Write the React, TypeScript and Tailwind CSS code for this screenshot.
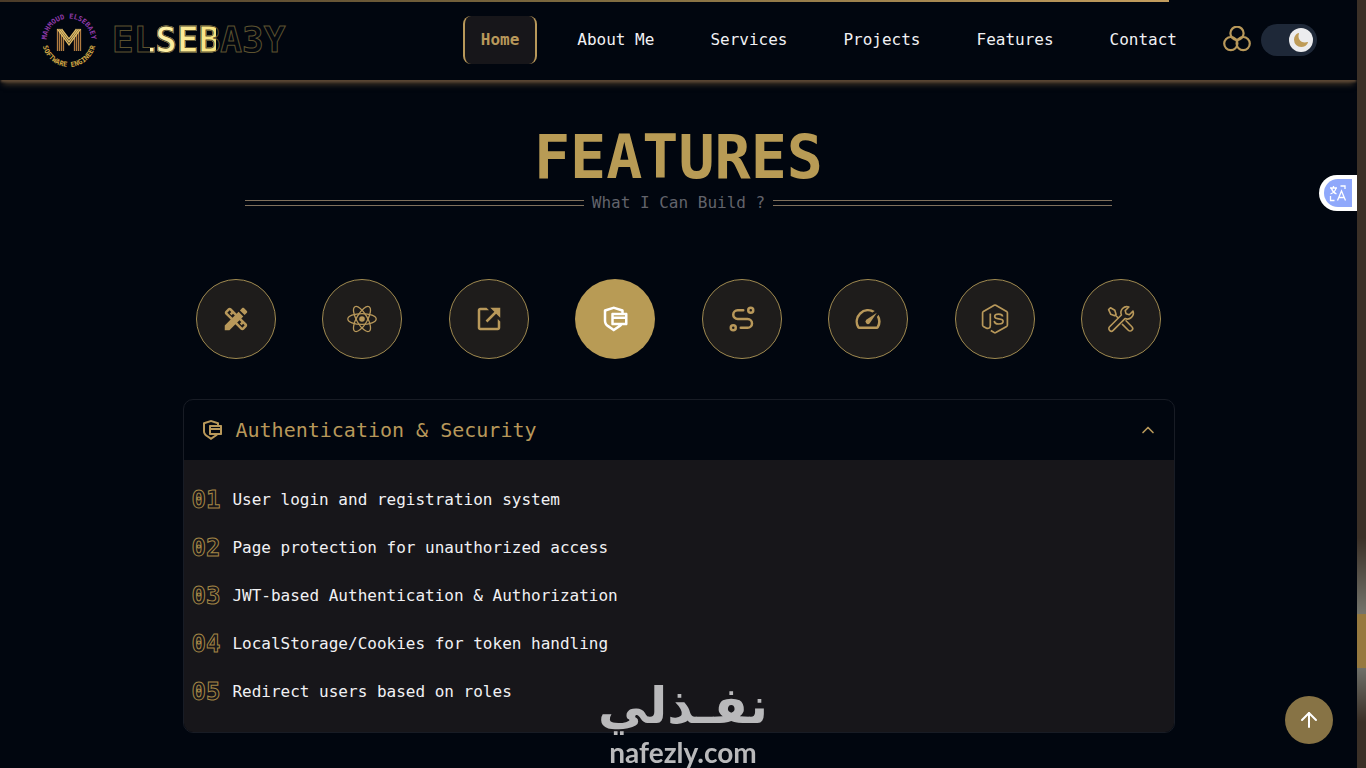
import React, { useState } from 'react'
import { BiLinkExternal } from 'react-icons/bi'
import { FiArrowUp, FiChevronUp } from 'react-icons/fi'
import { IoMoon } from 'react-icons/io5'
import { MdDesignServices, MdOutlineSpeed } from 'react-icons/md'
import { RiSecurePaymentLine } from 'react-icons/ri'
import { TbRoute } from 'react-icons/tb'

const AtomIcon = ({ className }: { className?: string }) => (
    <svg viewBox="0 0 30 30" className={className} fill="none" stroke="currentColor" strokeWidth="1.3" aria-hidden="true">
        <ellipse cx="15" cy="15" rx="14.2" ry="5.4" />
        <ellipse cx="15" cy="15" rx="14.2" ry="5.4" transform="rotate(60 15 15)" />
        <ellipse cx="15" cy="15" rx="14.2" ry="5.4" transform="rotate(120 15 15)" />
        <circle cx="15" cy="15" r="2.8" fill="currentColor" stroke="none" />
    </svg>
)

const NodeIcon = ({ className }: { className?: string }) => (
    <svg viewBox="0 0 30 30" className={className} fill="none" stroke="currentColor" strokeWidth="1.7" strokeLinejoin="round" aria-hidden="true">
        <path d="M10.300 9.600V21.500c0 2.600-2 3.600-4.200 2.400L3.400 22.400q-.8-.5-.8-1.400V8.800q0-.9.800-1.400L14.200 1.300q.8-.4 1.600 0L26.600 7.400q.8.500.8 1.400V21q0 .9-.8 1.400L15.800 28.600q-.8.400-1.600 0L10.800 26.600" />
        <path d="M22.600 12.500c-.2-1.700-1.500-2.400-3.900-2.400-2.600 0-4 .8-4 2.300 0 1.700 1.500 2.100 4 2.400 3 .3 4.400.8 4.400 2.500 0 1.800-1.500 2.700-4.300 2.700-3 0-4.400-1-4.500-3.100" />
    </svg>
)

const ToolsIcon = ({ className }: { className?: string }) => (
    <svg viewBox="0 0 30 30" className={className} fill="none" stroke="currentColor" strokeWidth="1.6" strokeLinejoin="round" strokeLinecap="round" aria-hidden="true">
        <path d="M22.900 3a6 6 0 0 0-7.500 8L3.600 22.800a2.500 2.500 0 0 0 3.600 3.600L19 14.600a6 6 0 0 0 8-7.500l-3.700 3.600-3.200-.9-.9-3.200z" />
        <path d="M2.600 5.600l1.900-1.900 4.300 2.600 1.300 4.100-1.400 1.400-3.900-1.500z" />
        <path d="M9.400 11.200l2.600 2.600M16.400 20.400l5.900 5.900a2.500 2.500 0 0 0 3.600-3.600l-5.900-5.900" />
    </svg>
)

const navLinks = ['Home', 'About Me', 'Services', 'Projects', 'Features', 'Contact']

const categories = [
    { name: 'Design', icon: MdDesignServices },
    { name: 'React', icon: AtomIcon },
    { name: 'External links', icon: BiLinkExternal },
    { name: 'Authentication & Security', icon: RiSecurePaymentLine },
    { name: 'Routing', icon: TbRoute },
    { name: 'Performance', icon: MdOutlineSpeed },
    { name: 'Node.js', icon: NodeIcon },
    { name: 'Tools', icon: ToolsIcon },
]

const features = [
    'User login and registration system',
    'Page protection for unauthorized access',
    'JWT-based Authentication & Authorization',
    'LocalStorage/Cookies for token handling',
    'Redirect users based on roles',
]

const LogoBadge = () => (
    <svg viewBox="0 0 60 60" className="h-[60px] w-[60px]" aria-hidden="true">
        <defs>
            <path id="ring-top" d="M6.500 31a22.500 22.500 0 0 1 45 0" />
            <path id="ring-bottom" d="M2 30a27 27 0 0 0 54 0" />
        </defs>
        <text className="fill-[#8e3aa8] font-['DejaVu_Sans_Mono',monospace] text-[7px] font-bold" textAnchor="middle">
            <textPath href="#ring-top" startOffset="50%">MAHMOUD ELSEBAEY</textPath>
        </text>
        <text className="fill-[#d3a845] font-['DejaVu_Sans_Mono',monospace] text-[7px] font-bold" textAnchor="middle">
            <textPath href="#ring-bottom" startOffset="50%">SOFTWARE ENGINEER</textPath>
        </text>
        <g fill="none" strokeWidth="1.3">
            <path stroke="#b07c42" d="M17.500 41V19M19.500 41V22M21.500 41V25M23.500 41V28M40.500 41V19M38.500 41V22M36.500 41V25M34.500 41V28" />
            <path stroke="#e3bf68" d="M17.500 19L29 35l11.500-16M19.500 19L29 32l9.500-13M21.500 19L29 29l7.500-10" />
        </g>
    </svg>
)

const ThemeRings = () => (
    <svg viewBox="0 0 28 28" className="h-7 w-7" fill="none" stroke="#b8985a" strokeWidth="2.2" aria-hidden="true">
        <circle cx="14" cy="7.300" r="6.600" />
        <circle cx="7.800" cy="17.600" r="6.600" />
        <circle cx="20.200" cy="17.600" r="6.600" />
    </svg>
)

const TranslateIcon = () => (
    <svg viewBox="0 0 20 20" className="h-5 w-5" fill="none" stroke="white" strokeWidth="1.300" aria-hidden="true">
        <path d="M2 5h7M5.500 3v2M2.500 11C6 9.500 7.500 8 8 5M3.500 5.500c.8 2.500 2.500 4.500 5 5.500" />
        <path d="M9.500 17.500L13.500 8l4 9.500M11 14.500h5" />
        <path d="M12.500 3h4.500v3M2.500 13v4.500h4" />
    </svg>
)

const Header = () => {
    const [dark, setDark] = useState(true)

    return (
        <header className="sticky top-0 z-10 flex h-20 items-center justify-between bg-[#01060f] px-10 shadow-[0_3px_2px_-1px_#5a4735,0_7px_6px_-3px_#4d3d2b]">
            <a href="#home" className="flex items-center gap-3">
                <LogoBadge />
                <span className="bg-[linear-gradient(90deg,transparent_22%,#fff3b0_22%,#f7e27e_60%,transparent_60%)] bg-clip-text text-4xl font-bold text-transparent [-webkit-text-stroke:1px_#5c522f]">
                    ELSEBA3Y
                </span>
            </a>
            <div className="flex items-center gap-[30px]">
                <nav className="flex gap-6">
                    {navLinks.map((link, i) => (
                        <a
                            key={link}
                            href={`#${link}`}
                            className={i === 0
                                ? 'flex h-12 items-center rounded-lg border-x-2 border-[#b8985a] bg-[#17161a] px-4 font-bold text-[#b8985a]'
                                : 'flex h-12 items-center px-4 text-[#f1f1f4]'}
                        >
                            {link}
                        </a>
                    ))}
                </nav>
                <div className="flex items-center gap-[10px]">
                    <button type="button" aria-label="Change colors"><ThemeRings /></button>
                    <label className="flex h-8 w-14 cursor-pointer items-center rounded-full bg-[#1e2838] p-1">
                        <input
                            type="checkbox"
                            aria-label="Dark mode"
                            className="sr-only"
                            checked={dark}
                            onChange={(e) => setDark(e.target.checked)}
                        />
                        <span className={dark
                            ? 'ml-auto flex h-6 w-6 items-center justify-center rounded-full bg-[#ececee]'
                            : 'flex h-6 w-6 items-center justify-center rounded-full bg-[#ececee]'}
                        >
                            <IoMoon className="h-4 w-4 text-[#bf9c58]" />
                        </span>
                    </label>
                </div>
            </div>
        </header>
    )
}

const FeaturePanel = () => {
    const [open, setOpen] = useState(true)

    return (
        <div className="mt-10 overflow-hidden rounded-[10px] border border-[#181c25]">
            <h2>
                <button
                    type="button"
                    aria-expanded={open}
                    onClick={() => setOpen(!open)}
                    className="flex h-[60px] w-full items-center gap-3 px-4 text-xl text-[#b8985a]"
                >
                    <RiSecurePaymentLine className="h-6 w-6" />
                    Authentication &amp; Security
                    <FiChevronUp className={open ? 'ml-auto h-5 w-5' : 'ml-auto h-5 w-5 rotate-180'} />
                </button>
            </h2>
            {open && (
                <ul className="bg-[#17161a] px-2 py-4">
                    {features.map((feature, i) => (
                        <li key={feature} className="flex h-12 items-center gap-3 text-[#f1f1f4]">
                            <span className="text-2xl font-bold text-transparent [-webkit-text-stroke:1px_#a48646]">0{i + 1}</span>
                            {feature}
                        </li>
                    ))}
                </ul>
            )}
        </div>
    )
}

const App = () => {
    const [active, setActive] = useState(3)

    return (
        <div className="min-h-screen bg-[#01060f] pr-[9px] font-['DejaVu_Sans_Mono','Liberation_Mono',monospace] text-base">
            <div className="fixed top-0 left-0 z-20 h-[2px] w-[1169px] max-w-full bg-linear-to-r from-[#4b3b29] via-[#7d6a3f] to-[#c39d5e]" />
            <Header />
            <main className="pt-[47px]">
                <h1 className="text-center text-[60px] leading-[60px] font-bold text-[#b89b55]">FEATURES</h1>
                <div className="flex items-center justify-center gap-2 pt-1 leading-6 text-[#62636b]">
                    <span className="h-[6px] w-1/4 border-y border-[#80705c]" />
                    <p>What I Can Build ?</p>
                    <span className="h-[6px] w-1/4 border-y border-[#80705c]" />
                </div>
                <section className="mx-auto max-w-5xl px-4 pt-16 pb-9">
                    <div className="flex justify-between px-[13px]">
                        {categories.map(({ name, icon: Icon }, i) => (
                            <button
                                key={name}
                                type="button"
                                aria-label={name}
                                onClick={() => setActive(i)}
                                className={i === active
                                    ? 'flex h-20 w-20 items-center justify-center rounded-full bg-[#b89b55] text-white'
                                    : 'flex h-20 w-20 items-center justify-center rounded-full border border-[#a08a50] bg-[#1e1c1b] text-[#b8985a]'}
                            >
                                <Icon className="h-[30px] w-[30px]" />
                            </button>
                        ))}
                    </div>
                    <FeaturePanel />
                </section>
            </main>

            {/* scrollbar */}
            <div className="fixed inset-y-0 right-0 z-30 w-[9px] bg-[linear-gradient(180deg,#3b3027_70%,#74746c_80%,#96793f_80%,#96793f_87%,#6e6f68_87%,#3b3027_94%)]" />

            <button type="button" aria-label="Translate" className="fixed top-[175px] right-[9px] z-20 flex h-9 w-[38px] items-center rounded-l-full bg-white pl-[5px]">
                <span className="flex h-7 w-7 items-center justify-center rounded-l-full rounded-r-sm bg-[#8fa8fb]">
                    <TranslateIcon />
                </span>
            </button>
            <button type="button" aria-label="Back to top" className="fixed right-[33px] bottom-6 z-20 flex h-12 w-12 items-center justify-center rounded-full bg-[#877345] text-white">
                <FiArrowUp className="h-6 w-6" />
            </button>

            <div className="pointer-events-none fixed inset-x-0 bottom-0 z-20 flex flex-col items-center text-[#b9b9bb]">
                <span lang="ar" dir="rtl" className="font-['DejaVu_Sans',sans-serif] text-[50px] leading-[60px] font-bold">نفـذلي</span>
                <span className="font-['Lato',sans-serif] text-[28px] leading-8 font-bold">nafezly.com</span>
            </div>
        </div>
    )
}

export default App
